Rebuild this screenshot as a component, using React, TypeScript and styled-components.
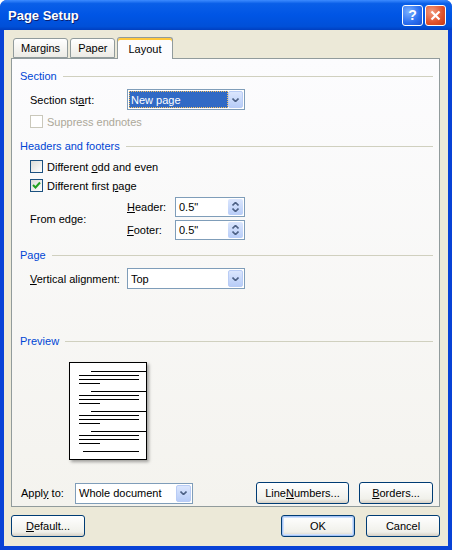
import React from 'react'
import styled, { createGlobalStyle } from 'styled-components'

const Global = createGlobalStyle`
  body { margin: 0; background: #fff; font-family: Tahoma, "Liberation Sans", "DejaVu Sans", sans-serif; font-size: 11px; color: #000; }
`

const Window = styled.div`
  width: 452px;
  height: 550px;
  display: flex;
  flex-direction: column;
  background: #0842d6;
  border-radius: 7px 7px 0 0;
  overflow: hidden;
`

const TitleBar = styled.div`
  height: 30px;
  flex: none;
  display: flex;
  align-items: center;
  padding: 0 6px 0 8px;
  background: linear-gradient(#3d8bff 0%, #0a5fe8 12%, #0055e5 50%, #0050d8 88%, #003fc0 100%);
`

const Title = styled.div`
  flex: 1;
  color: #fff;
  font-weight: bold;
  font-size: 13px;
  text-shadow: 1px 1px #0a1e70;
`

const CapButton = styled.div<{ $red?: boolean }>`
  width: 21px;
  height: 21px;
  margin-left: 2px;
  border: 1px solid #fff;
  border-radius: 3px;
  box-sizing: border-box;
  display: flex;
  align-items: center;
  justify-content: center;
  color: #fff;
  font-weight: bold;
  font-size: 14px;
  background: ${p => p.$red
    ? 'radial-gradient(circle at 30% 30%, #f29b7e, #e0512a 60%, #c43a14)'
    : 'radial-gradient(circle at 30% 30%, #7ab0ff, #2a6ef0 60%, #1a52d0)'};
`

const Body = styled.div`
  flex: 1;
  margin: 0 4px 4px 4px;
  background: #ece9d8;
  padding: 6px 8px 0 7px;
  display: flex;
  flex-direction: column;
`

const Tabs = styled.div`
  display: flex;
  align-items: flex-end;
  height: 22px;
  padding-left: 2px;
`

const Tab = styled.div<{ $active?: boolean }>`
  height: ${p => (p.$active ? 22 : 20)}px;
  padding: 0 ${p => (p.$active ? 10 : 7)}px;
  margin-right: ${p => (p.$active ? 0 : 2)}px;
  display: flex;
  align-items: center;
  box-sizing: border-box;
  border: 1px solid #919b9c;
  border-bottom: ${p => (p.$active ? 'none' : '1px solid #919b9c')};
  border-radius: 3px 3px 0 0;
  background: ${p => (p.$active ? '#fcfcfe' : 'linear-gradient(#fff, #ecebe5)')};
  box-shadow: ${p => (p.$active ? 'inset 0 2px #ffc83c' : 'none')};
  position: relative;
  z-index: ${p => (p.$active ? 2 : 1)};
  margin-bottom: ${p => (p.$active ? -1 : 0)}px;
`

const Panel = styled.div`
  height: 449px;
  box-sizing: border-box;
  border: 1px solid #919b9c;
  background: linear-gradient(#fcfcfe, #f4f3ee);
  padding: 0 6px 0 8px;
  display: flex;
  flex-direction: column;
`

const Group = styled.div<{ $top: number }>`
  margin-top: ${p => p.$top}px;
  height: 14px;
  display: flex;
  align-items: center;
  color: #0046d5;
  &::after {
    content: '';
    flex: 1;
    height: 1px;
    background: #d0d0bf;
    margin-left: 6px;
  }
`

const Row = styled.div<{ $top: number; $indent?: number }>`
  margin-top: ${p => p.$top}px;
  padding-left: ${p => p.$indent ?? 10}px;
  display: flex;
  align-items: center;
`

const Label = styled.span<{ $w?: number; $dim?: boolean }>`
  width: ${p => (p.$w ? p.$w + 'px' : 'auto')};
  flex: none;
  color: ${p => (p.$dim ? '#aca899' : '#000')};
`

const Combo = styled.div<{ $w: number }>`
  width: ${p => p.$w}px;
  height: 21px;
  box-sizing: border-box;
  border: 1px solid #7f9db9;
  background: #fff;
  display: flex;
  align-items: center;
  padding: 1px;
`

const ComboText = styled.div<{ $sel?: boolean }>`
  flex: 1;
  height: 100%;
  display: flex;
  align-items: center;
  padding-left: 2px;
  box-sizing: border-box;
  background: ${p => (p.$sel ? '#316ac5' : 'transparent')};
  color: ${p => (p.$sel ? '#fff' : '#000')};
  outline: ${p => (p.$sel ? '1px dotted #f5c060' : 'none')};
  outline-offset: -1px;
`

const DropBtn = styled.div`
  width: 15px;
  height: 17px;
  border-radius: 2px;
  background: linear-gradient(#dbe6fd, #b8cdf8);
  border: 1px solid #b9ccf5;
  box-sizing: border-box;
  display: flex;
  align-items: center;
  justify-content: center;
`

const Chevron = ({ up }: { up?: boolean }) => (
  <svg width="7" height="4" viewBox="0 0 7 4">
    <path d={up ? 'M0.5 3.5 L3.5 0.5 L6.5 3.5' : 'M0.5 0.5 L3.5 3.5 L6.5 0.5'} fill="none" stroke="#4d6185" strokeWidth="1.6" />
  </svg>
)

const Box = styled.span<{ $dim?: boolean }>`
  width: 13px;
  height: 13px;
  box-sizing: border-box;
  border: 1px solid ${p => (p.$dim ? '#cac8bb' : '#1c5180')};
  background: ${p => (p.$dim ? '#fff' : 'linear-gradient(135deg, #dcdcd7, #fff)')};
  margin-right: 4px;
  display: flex;
  align-items: center;
  justify-content: center;
`

const Check = ({ label, checked, dim, top, u }: { label: string; checked?: boolean; dim?: boolean; top: number; u?: number }) => (
  <Row $top={top}>
    <Box $dim={dim}>
      {checked && (
        <svg width="9" height="9" viewBox="0 0 9 9">
          <path d="M1 4 L3.5 6.5 L8 1.5" fill="none" stroke="#21a121" strokeWidth="2" />
        </svg>
      )}
    </Box>
    <Label $dim={dim}>{underline(label, u)}</Label>
  </Row>
)

const underline = (s: string, i?: number) =>
  i === undefined ? s : (<>{s.slice(0, i)}<u>{s[i]}</u>{s.slice(i + 1)}</>)

const EdgeBlock = styled.div`
  margin-top: 5px;
  padding-left: 10px;
  display: flex;
  align-items: center;
`

const SpinCol = styled.div`
  display: flex;
  flex-direction: column;
  gap: 3px;
`

const Spin = styled.div`
  width: 70px;
  height: 20px;
  box-sizing: border-box;
  border: 1px solid #7f9db9;
  background: #fff;
  display: flex;
  align-items: center;
  padding: 1px 1px 1px 3px;
`

const SpinBtns = styled.div`
  width: 15px;
  height: 16px;
  margin-left: auto;
  border-radius: 2px;
  background: linear-gradient(#dbe6fd, #b8cdf8);
  display: flex;
  flex-direction: column;
  align-items: center;
  justify-content: space-evenly;
`

const PreviewPage = styled.div`
  margin: 14px 0 0 49px;
  width: 78px;
  height: 98px;
  box-sizing: border-box;
  border: 1px solid #000;
  background: #fff;
  box-shadow: 2px 2px 3px rgba(0,0,0,0.35);
`

const Button = styled.div<{ $w: number; $def?: boolean }>`
  width: ${p => p.$w}px;
  height: 22px;
  box-sizing: border-box;
  border: 1px solid #003c74;
  border-radius: 3px;
  background: linear-gradient(#fff, #f0f0ea 80%, #d6d0c5);
  box-shadow: ${p => (p.$def ? 'inset 0 0 0 1px #a6c4f5, inset 0 0 0 2px #cee0fb' : 'none')};
  display: flex;
  align-items: center;
  justify-content: center;
`

const Footer = styled.div`
  margin-top: 8px;
  display: flex;
  align-items: center;
  gap: 11px;
`

const Spacer = styled.div`flex: 1;`

const lines = [
  [13, 56, 9], [1, 60, 13], [1, 60, 17], [1, 21, 21],
]

export default function App() {
  return (
    <>
      <Global />
      <Window>
        <TitleBar>
          <Title>Page Setup</Title>
          <CapButton>?</CapButton>
          <CapButton $red>
            <svg width="11" height="11" viewBox="0 0 11 11"><path d="M1.5 1.5 L9.5 9.5 M9.5 1.5 L1.5 9.5" stroke="#fff" strokeWidth="2.2" /></svg>
          </CapButton>
        </TitleBar>
        <Body>
          <Tabs>
            <Tab>Margins</Tab>
            <Tab>Paper</Tab>
            <Tab $active>Layout</Tab>
          </Tabs>
          <Panel>
            <Group $top={10}>Section</Group>
            <Row $top={6}>
              <Label $w={97}>{underline('Section start:', 10)}</Label>
              <Combo $w={118}><ComboText $sel>New page</ComboText><DropBtn><Chevron /></DropBtn></Combo>
            </Row>
            <Check top={5} label="Suppress endnotes" dim />
            <Group $top={11}>Headers and footers</Group>
            <Check top={7} label="Different odd and even" u={10} />
            <Check top={6} label="Different first page" checked u={16} />
            <EdgeBlock>
              <Label $w={97}>From edge:</Label>
              <SpinCol>
                <Row $top={0} $indent={0}><Label $w={48}>{underline('Header:', 0)}</Label><Spin>0.5"<SpinBtns><Chevron up /><Chevron /></SpinBtns></Spin></Row>
                <Row $top={0} $indent={0}><Label $w={48}>{underline('Footer:', 0)}</Label><Spin>0.5"<SpinBtns><Chevron up /><Chevron /></SpinBtns></Spin></Row>
              </SpinCol>
            </EdgeBlock>
            <Group $top={8}>Page</Group>
            <Row $top={6}>
              <Label $w={97}>{underline('Vertical alignment:', 0)}</Label>
              <Combo $w={118}><ComboText>Top</ComboText><DropBtn><Chevron /></DropBtn></Combo>
            </Row>
            <Group $top={45}>Preview</Group>
            <PreviewPage>
              <svg width="76" height="96" viewBox="0 0 76 96">
                {[0, 20, 40, 60].map(off => lines.map(([x, w, y], i) => (
                  <rect key={off + '-' + i} x={8 + x} y={y + off - 1} width={w} height={1} fill="#000" />
                )))}
                <rect x={13} y={88} width={56} height={1} fill="#000" />
              </svg>
            </PreviewPage>
            <Row $top={22} $indent={1}>
              <Label $w={54}>{underline('Apply to:', 4)}</Label>
              <Combo $w={118}><ComboText>Whole document</ComboText><DropBtn><Chevron /></DropBtn></Combo>
              <Spacer />
              <Button $w={93}>{underline('Line Numbers...', 5)}</Button>
              <Button $w={74} style={{ marginLeft: 10 }}>{underline('Borders...', 0)}</Button>
            </Row>
          </Panel>
          <Footer>
            <Button $w={74}>{underline('Default...', 0)}</Button>
            <Spacer />
            <Button $w={74} $def>OK</Button>
            <Button $w={74}>Cancel</Button>
          </Footer>
        </Body>
      </Window>
    </>
  )
}
